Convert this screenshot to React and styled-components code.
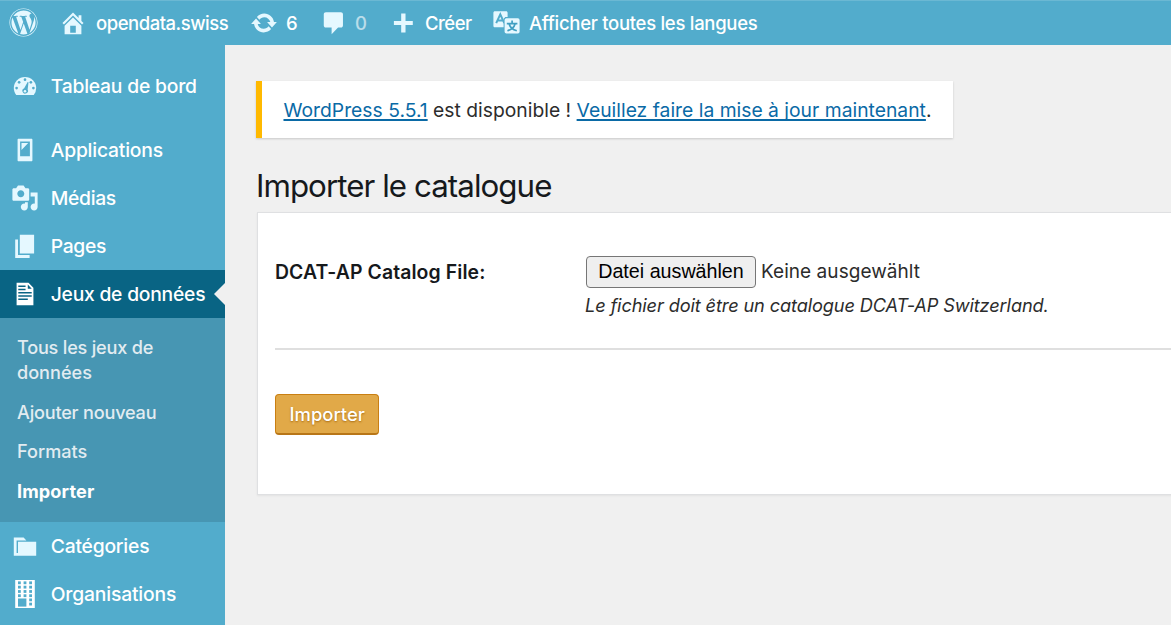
import React from 'react';
import styled, { createGlobalStyle, css } from 'styled-components';
import { FaWordpress } from 'react-icons/fa';

const Global = createGlobalStyle`
  *, *::before, *::after { box-sizing: border-box; }
  body {
    margin: 0;
    background: #f0f0f0;
    font-family: Inter, "Liberation Sans", sans-serif;
    overflow: hidden;
  }
  a { color: #0a6aa6; text-decoration-thickness: 1.5px; text-underline-offset: 2px; text-decoration-skip-ink: none; }
`;

const Page = styled.div`
  display: flex;
  flex-direction: column;
  height: 625px;
  overflow: hidden;
`;

const Text = styled.span`
  letter-spacing: ${(p) => p.$track || 0}px;
  white-space: nowrap;
`;

const AdminBar = styled.header`
  display: flex;
  align-items: center;
  height: 45px;
  flex: none;
  padding-left: 9px;
  background: #52accc;
  box-shadow: inset 0 1px #6bb8d3;
  color: #fff;
  font-size: 18.5px;
  font-weight: 450;
`;

const BarItem = styled.div`
  display: flex;
  align-items: center;
  height: 45px;
  width: ${(p) => (p.$width ? `${p.$width}px` : 'auto')};
  gap: ${(p) => p.$gap || 0}px;
  flex: none;
`;

const Count = styled.span`
  opacity: ${(p) => (p.$dim ? 0.6 : 1)};
`;

const Icon = styled.svg`
  display: block;
  flex: none;
  width: ${(p) => p.$size || 28}px;
  height: ${(p) => p.$size || 28}px;
  fill: ${(p) => p.$color || '#e5f8ff'};
  fill-rule: evenodd;
`;

const Body = styled.div`
  display: flex;
  flex: 1;
  min-height: 0;
`;

const Sidebar = styled.nav`
  width: 225.4px;
  flex: none;
  padding-top: 17px;
  background: #52accc;
  color: #fff;
`;

const MenuItem = styled.div`
  display: flex;
  align-items: center;
  position: relative;
  height: 48px;
  margin-bottom: ${(p) => p.$after || 0}px;
  padding-left: 11px;
  gap: 11.7px;
  font-size: 19.3px;
  font-weight: 450;
  ${(p) =>
    p.$active &&
    css`
      background: #096484;
      &::after {
        content: '';
        position: absolute;
        right: 0;
        top: 13px;
        border: 11px solid transparent;
        border-left: 0;
        border-right-color: #f0f0f0;
      }
    `}
`;

const SubMenu = styled.div`
  display: flex;
  flex-direction: column;
  gap: 14.3px;
  height: 204px;
  padding: 17px 17px 0;
  background: #4796b3;
  color: #e2ecf1;
  font-size: 18.1px;
  font-weight: 450;
  line-height: 25.3px;
`;

const SubItem = styled.div`
  ${(p) => p.$current && 'color: #fff; font-weight: 700;'}
`;

const Content = styled.main`
  flex: 1;
  min-width: 0;
  padding: 36px 0 0 31.6px;
  color: #2c2c2c;
`;

const Notice = styled.div`
  display: flex;
  align-items: center;
  width: 696.5px;
  height: 57px;
  margin-left: -0.5px;
  padding: 1px 0 0 21px;
  border-left: 6px solid #ffb900;
  background: #fff;
  box-shadow: 0 1px 2px rgba(0, 0, 0, 0.16);
  font-size: 19.3px;
`;

const Title = styled.h1`
  margin: 29px 0 0 -1px;
  height: 45px;
  line-height: 39px;
  font-size: 31.3px;
  font-weight: 400;
  color: #16191c;
`;

const Card = styled.section`
  height: 283px;
  margin-right: -4px;
  padding: 42px 0 0 17px;
  border: 1px solid #dfe0e2;
  background: #fff;
  box-shadow: 0 1px 2px rgba(0, 0, 0, 0.06);
`;

const Field = styled.div`
  display: flex;
  height: 95px;
  border-bottom: 2px solid #dfdfdf;
`;

const Label = styled.label`
  width: 310px;
  flex: none;
  line-height: 34px;
  font-size: 19.4px;
  font-weight: 600;
  color: #16191c;
`;

const FileRow = styled.div`
  display: flex;
  align-items: center;
  height: 33px;
  gap: 5px;
  padding-left: 1px;
  font-size: 19px;
`;

const FileButton = styled.button`
  width: 170px;
  height: 32px;
  padding: 0;
  border: 1.5px solid #767676;
  border-radius: 4px;
  background: #efefef;
  color: #000;
  font: 19.7px "Liberation Sans", sans-serif;
`;

const Hint = styled.p`
  margin: 4px 0 0;
  line-height: 26px;
  font-size: 18.2px;
  font-style: italic;
`;

const Submit = styled.button`
  display: block;
  width: 104.5px;
  height: 41px;
  margin-top: 43.5px;
  padding: 0;
  border: 1px solid #c97f12;
  border-bottom: 2px solid #b87617;
  border-radius: 4px;
  background: #e1a948;
  color: #fff;
  font: 450 18.4px Inter, sans-serif;
  text-shadow: 0 1px 2px #a86c12;
`;

const paths = {
  home: 'M16 8.5l1.53 1.53-1.06 1.06L10 4.6l-6.47 6.49-1.06-1.06L10 2.5l4 4v-2h2v4zm-6-2.46l6 5.99V18H4v-5.97zM12 17v-5H8v5h4z',
  update:
    'M10.2 3.28c3.53 0 6.43 2.61 6.92 6h2.08l-3.5 4-3.5-4h2.32c-.45-1.97-2.21-3.45-4.32-3.45-1.45 0-2.73.71-3.54 1.78L4.95 5.66C6.23 4.2 8.11 3.28 10.2 3.28zm-.4 13.44c-3.52 0-6.43-2.61-6.92-6H.8l3.5-4c1.17 1.33 2.33 2.67 3.5 4H5.48c.45 1.97 2.21 3.45 4.32 3.45 1.45 0 2.73-.71 3.54-1.78l1.71 1.95c-1.28 1.46-3.15 2.38-5.25 2.38z',
  comment: 'M4.2 2.3h10.7c.9 0 1.5.6 1.5 1.5v8c0 .9-.6 1.5-1.5 1.5H12.9L8.3 18v-4.7H4.2c-.9 0-1.5-.6-1.5-1.5v-8c0-.9.6-1.5 1.5-1.5z',
  plus: 'M17 8.5v3h-5.2v5.2H8.7V11.5H3.5v-3h5.2V3.3h3.1v5.2z',
  phone: 'M5.4 2h9.2c.4 0 .7.3.7.7v14.6c0 .4-.3.7-.7.7H5.4c-.4 0-.7-.3-.7-.7V2.7c0-.4.3-.7.7-.7zM6.5 4v10.5h7V4zM7.5 5h4.8L7.5 10z',
  media:
    'M13 11V4c0-.55-.45-1-1-1h-1.67L9 1H5L3.67 3H2c-.55 0-1 .45-1 1v7c0 .55.45 1 1 1h10c.55 0 1-.45 1-1zM7 4.5c1.38 0 2.5 1.12 2.5 2.5S8.38 9.5 7 9.5 4.5 8.38 4.5 7 5.62 4.5 7 4.5zM14 6h5v10.5c0 1.38-1.12 2.5-2.5 2.5S14 17.88 14 16.5s1.12-2.5 2.5-2.5c.17 0 .34.02.5.05V9h-3V6zm-4 8.05V13h2v3.5c0 1.38-1.12 2.5-2.5 2.5S7 17.88 7 16.5 8.12 14 9.5 14c.17 0 .34.02.5.05z',
  pages: 'M6.3 15.4V2h10.2v13.4zM5 16.5h8.3v2H3V5.4h2z',
  document:
    'M4 2h8.5L16 5.6V18H4zM5.2 4v1h5.2V4zM12 3.3v2.9h2.8zM5.2 6.3v1h5.2v-1zM5.2 8.6v1h9.6v-1zM5.2 10.9v1h9.6v-1zM5.2 13.2v1H12v-1z',
  folder: 'M5 7h13v10H2V4h7l2 2H4v9h1V7z',
};

const windows = [
  [5, 1], [9, 1], [13, 1],
  [5, 4.1], [9, 4.1], [13, 4.1],
  [5, 7.2], [9, 7.2], [13, 7.2],
  [5, 10.2], [9, 10.2], [13, 10.2],
  [13, 13.2], [13, 16.2],
];

function Glyph({ name, size, color }) {
  return (
    <Icon viewBox="0 0 20 20" $size={size} $color={color}>
      <path d={paths[name]} />
    </Icon>
  );
}

function DashboardIcon() {
  return (
    <Icon viewBox="0 0 20 20">
      <path d="M3.76 16.5h12.48A8 8 0 0 0 18 11.5a8 8 0 1 0-16 0c0 1.9.66 3.63 1.76 5z" />
      <g fill="#52accc">
        <circle cx="10" cy="5.5" r=".95" />
        <circle cx="5.8" cy="7.4" r=".95" />
        <circle cx="14.2" cy="7.4" r=".95" />
        <circle cx="4" cy="11.5" r=".95" />
        <circle cx="16" cy="11.5" r=".95" />
        <path d="M11.9 7.1l.6.2-.6 5.2a2 2 0 1 1-2.5-.9z" />
      </g>
      <circle cx="10" cy="13.7" r=".9" />
    </Icon>
  );
}

function BuildingIcon() {
  return (
    <Icon viewBox="0 0 20 20">
      <path d="M3 0h14v20H3z" fill="#fff" />
      <g fill="#52accc">
        {windows.map(([x, y]) => (
          <rect key={`${x}-${y}`} x={x} y={y} width="2" height="2" />
        ))}
        <rect x="5" y="13.2" width="6" height="5.8" />
      </g>
    </Icon>
  );
}

function TranslateIcon() {
  return (
    <Icon viewBox="0 0 28 28">
      <path d="M3 2.3h11c1 0 1.6.6 1.6 1.6V8H13v10.3H3c-1 0-1.6-.6-1.6-1.6V3.9c0-1 .6-1.6 1.6-1.6z" />
      <path d="M4.2 14.2 8.3 5.3l4 8.9M6 11.4h4.8" fill="none" stroke="#52accc" strokeWidth="2" />
      <rect x="11.6" y="8.2" width="16.4" height="17" rx="2.6" fill="#52accc" />
      <rect x="12.6" y="9.2" width="15" height="15.4" rx="1.8" />
      <path
        d="M20.1 11.4v2.8M14.8 14.6h10.6M17.2 15c.8 3.2 3.4 5.6 7.6 6.8M23 15c-.8 3.2-3.4 5.6-7.6 6.8"
        fill="none"
        stroke="#3f9fc2"
        strokeWidth="1.7"
      />
    </Icon>
  );
}

export default function App() {
  return (
    <Page>
      <Global />
      <AdminBar>
        <BarItem $width={50}>
          <FaWordpress size={29} color="#e5f8ff" />
        </BarItem>
        <BarItem $width={190.5} $gap={9}>
          <Glyph name="home" />
          <Text $track={-0.48}>opendata.swiss</Text>
        </BarItem>
        <BarItem $width={70} $gap={8.5}>
          <Glyph name="update" />
          <Count>6</Count>
        </BarItem>
        <BarItem $width={69} $gap={7.5}>
          <Glyph name="comment" />
          <Count $dim>0</Count>
        </BarItem>
        <BarItem $width={103.5} $gap={8.5}>
          <Glyph name="plus" />
          <Text $track={-0.5}>Créer</Text>
        </BarItem>
        <BarItem $gap={9}>
          <TranslateIcon />
          <Text $track={-0.29}>Afficher toutes les langues</Text>
        </BarItem>
      </AdminBar>
      <Body>
        <Sidebar>
          <MenuItem $after={16}><DashboardIcon /><Text $track={-0.2}>Tableau de bord</Text></MenuItem>
          <MenuItem><Glyph name="phone" /><Text $track={-0.2}>Applications</Text></MenuItem>
          <MenuItem><Glyph name="media" /><Text $track={-0.3}>Médias</Text></MenuItem>
          <MenuItem><Glyph name="pages" /><Text $track={-0.3}>Pages</Text></MenuItem>
          <MenuItem $active><Glyph name="document" color="#fff" /><Text $track={-0.23}>Jeux de données</Text></MenuItem>
          <SubMenu>
            <SubItem><Text $track={-0.2}>Tous les jeux de</Text><br /><Text>données</Text></SubItem>
            <SubItem><Text $track={-0.2}>Ajouter nouveau</Text></SubItem>
            <SubItem><Text>Formats</Text></SubItem>
            <SubItem $current><Text $track={0.12}>Importer</Text></SubItem>
          </SubMenu>
          <MenuItem><Glyph name="folder" /><Text $track={-0.2}>Catégories</Text></MenuItem>
          <MenuItem><BuildingIcon /><Text $track={-0.16}>Organisations</Text></MenuItem>
        </Sidebar>
        <Content>
          <Notice>
            <Text $track={0.01}>
              <a href="#update">WordPress 5.5.1</a> est disponible ! <a href="#now">Veuillez faire la mise à jour maintenant</a>.
            </Text>
          </Notice>
          <Title><Text $track={-0.95}>Importer le catalogue</Text></Title>
          <Card>
            <Field>
              <Label><Text $track={0.1}>DCAT-AP Catalog File:</Text></Label>
              <div>
                <FileRow>
                  <FileButton><Text>Datei auswählen</Text></FileButton>
                  <Text $track={0.05}>Keine ausgewählt</Text>
                </FileRow>
                <Hint><Text $track={-0.13}>Le fichier doit être un catalogue DCAT-AP Switzerland.</Text></Hint>
              </div>
            </Field>
            <Submit><Text>Importer</Text></Submit>
          </Card>
        </Content>
      </Body>
    </Page>
  );
}
